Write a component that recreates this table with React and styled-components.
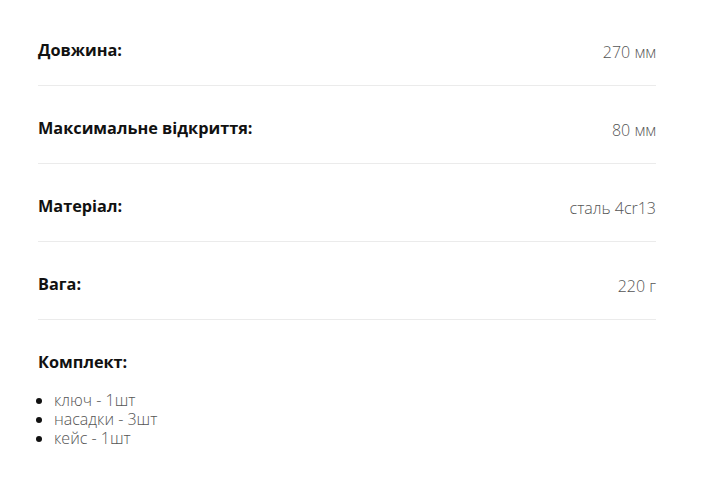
import React from 'react';
import styled, { createGlobalStyle } from 'styled-components';

const specs = [
    { label: 'Довжина:', value: '270 мм' },
    { label: 'Максимальне відкриття:', value: '80 мм' },
    { label: 'Матеріал:', value: 'сталь 4cr13' },
    { label: 'Вага:', value: '220 г' },
];

const kit = ['ключ - 1шт', 'насадки - 3шт', 'кейс - 1шт'];

const GlobalStyle = createGlobalStyle`
    body {
        margin: 0;
        background: #ffffff;
        font-family: 'Open Sans', 'Noto Sans', sans-serif;
    }
`;

const Wrapper = styled.div`
    width: 618px;
    padding: 8px 0 0 38px;
`;

const Row = styled.div`
    display: flex;
    justify-content: space-between;
    align-items: flex-start;
    padding: 30px 0 21px;
    border-bottom: 1px solid #ebebeb;
`;

const Label = styled.div`
    font-size: 16.3px;
    line-height: 24px;
    font-weight: 700;
    color: #111111;
`;

const Value = styled.div`
    padding-top: 2px;
    font-size: 16px;
    line-height: 24px;
    font-weight: 300;
    color: #555555;
`;

const KitBlock = styled.div`
    padding-top: 30px;
`;

const KitList = styled.ul`
    margin: 17px 0 0;
    padding-left: 16px;
    list-style: disc;

    li {
        font-size: 16px;
        line-height: 19px;
        font-weight: 300;
        color: #555555;
    }

    li::marker {
        color: #111111;
    }
`;

export default function App() {
    return (
        <>
            <GlobalStyle />
            <Wrapper>
                {specs.map(s => (
                    <Row key={s.label}>
                        <Label>{s.label}</Label>
                        <Value>{s.value}</Value>
                    </Row>
                ))}
                <KitBlock>
                    <Label>Комплект:</Label>
                    <KitList>
                        {kit.map(k => <li key={k}>{k}</li>)}
                    </KitList>
                </KitBlock>
            </Wrapper>
        </>
    );
}
